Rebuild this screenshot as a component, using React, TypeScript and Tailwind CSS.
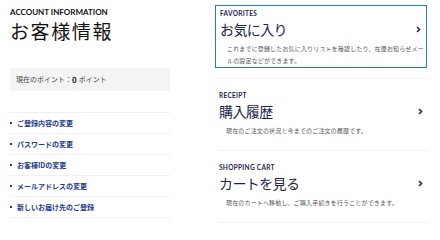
import { ReactNode } from "react";

const jp = "font-['Noto_Sans_CJK_JP','Noto_Sans',sans-serif]";
const latin = "font-['Lato','Noto_Sans',sans-serif]";

const links = [
  "ご登録内容の変更",
  "パスワードの変更",
  "お客様IDの変更",
  "メールアドレスの変更",
  "新しいお届け先のご登録",
];

function Chevron() {
  return (
    <svg width="5" height="7" viewBox="0 0 5 7" className="mr-[5px]">
      <path d="M1 1l2.6 2.5L1 6" fill="none" stroke="#1c2550" strokeWidth="1.5" />
    </svg>
  );
}

function Card({ label, title, children }: { label: string; title: string; children: ReactNode }) {
  return (
    <div className="flex flex-col">
      <p className={`${latin} text-[6.5px] leading-[7px] font-bold tracking-[0.3px] text-[#1c2550]`}>{label}</p>
      <div className="flex items-center justify-between mt-[2px]">
        <h2 className={`${jp} text-[14px] leading-[20px] text-[#1c2550] tracking-[-0.6px]`}>{title}</h2>
        <Chevron />
      </div>
      <div className={`${jp} pl-[7px] mt-[4px] text-[6px] leading-[12px] tracking-[0.16px] text-[#555] w-[207px] [line-break:anywhere]`}>
        {children}
      </div>
    </div>
  );
}

export default function App() {
  return (
    <div className="w-[440px] h-[240px] bg-white flex overflow-hidden">
      {/* 左カラム */}
      <div className="w-[160px] ml-[10px] pt-[8px] flex flex-col">
        <p className={`${latin} text-[8px] leading-[9px] font-bold text-[#111]`}>ACCOUNT INFORMATION</p>
        <h1 className={`${jp} text-[19px] leading-[22px] mt-[3px] text-[#111] tracking-[1.6px]`}>お客様情報</h1>

        <div className={`${jp} mt-[26px] h-[23px] bg-[#f4f4f4] flex items-center pl-[6px] text-[7px] text-[#444]`}>
          現在のポイント：<span className="text-[8px] font-bold text-[#222] mr-[2px]">0</span>ポイント
        </div>

        <ul className="mt-[21px] border-t border-[#f1f1f1]">
          {links.map((l) => (
            <li key={l} className="h-[21px] border-b border-[#f1f1f1] flex items-center">
              <span className="w-[2px] h-[2px] bg-[#243a8c] mr-[5px]" />
              <span className={`${jp} text-[7px] font-bold text-[#243a8c]`}>{l}</span>
            </li>
          ))}
        </ul>
      </div>

      {/* 右カラム */}
      <div className="ml-[45px] w-[213px] pt-[5px] flex flex-col">
        <div className="w-[212px] h-[63px] border border-[#1b80cc] pl-[4px] pt-[4px]">
          <Card label="FAVORITES" title="お気に入り">
            これまでに登録したお気に入りリストを確認したり、在庫お知らせメールの設定などができます。
          </Card>
        </div>

        <div className="mt-[10px] ml-[3px] border-t border-[#f1f1f1] pl-[1px] pt-[13px] h-[72px]">
          <Card label="RECEIPT" title="購入履歴">
            現在のご注文の状況と今までのご注文の履歴です。
          </Card>
        </div>

        <div className="ml-[3px] border-t border-[#f1f1f1] pl-[1px] pt-[13px] h-[73px] border-b">
          <Card label="SHOPPING CART" title="カートを見る">
            現在のカートへ移動し、ご購入手続きを行うことができます。
          </Card>
        </div>
      </div>
    </div>
  );
}
